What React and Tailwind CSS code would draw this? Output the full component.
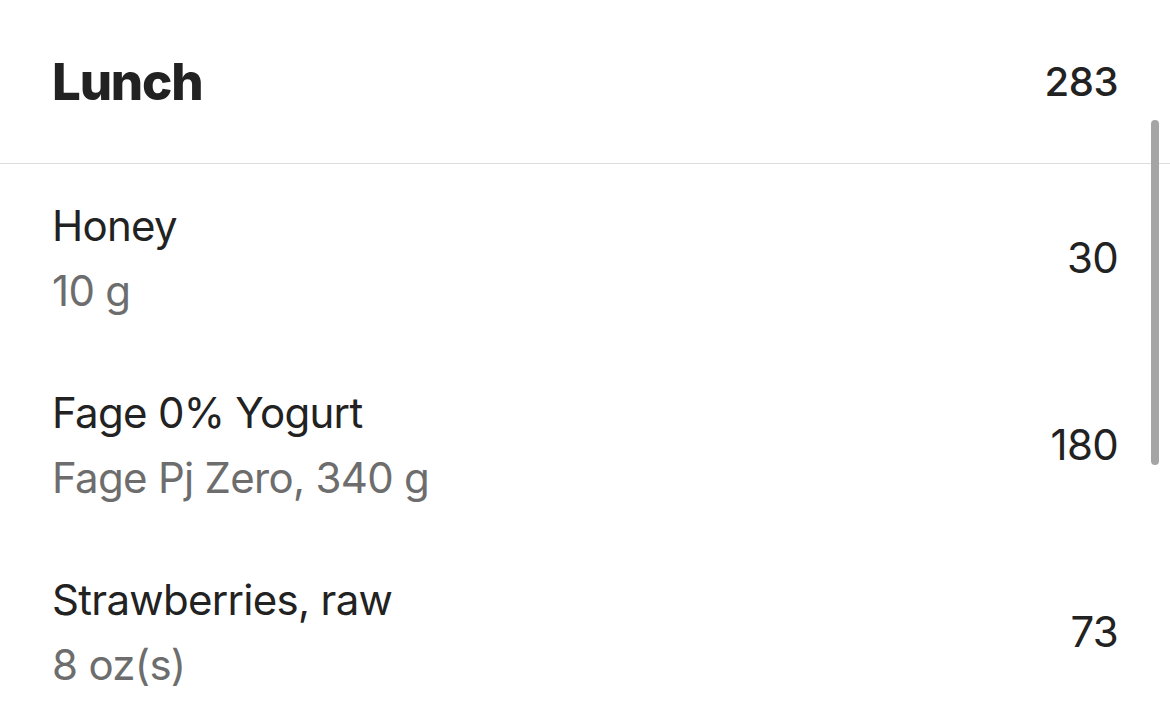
const items = [
  { name: 'Honey', detail: '10 g', kcal: 30 },
  { name: 'Fage 0% Yogurt', detail: 'Fage Pj Zero, 340 g', kcal: 180 },
  { name: 'Strawberries, raw', detail: '8 oz(s)', kcal: 73 },
];

export default function App() {
  return (
    <div className="relative w-[1170px] h-[720px] overflow-hidden bg-white font-['Inter',sans-serif] text-[#222222]">
      {/* Meal header */}
      <div className="flex h-[164px] items-center justify-between border-b border-[#dcdcdc] px-[52px]">
        <h2 className="text-[51px] font-extrabold leading-none tracking-[-1.2px]">Lunch</h2>
        <span className="text-[40px] font-medium leading-none tracking-[-0.5px]">283</span>
      </div>

      {/* Food entries */}
      {items.map(item => (
        <div key={item.name} className="flex h-[187px] items-center justify-between px-[52px] tracking-[-0.7px]">
          <div className="flex flex-col">
            <span className="text-[42px] leading-[65px]">{item.name}</span>
            <span className="text-[42px] leading-[65px] text-[#6d6d6d]">{item.detail}</span>
          </div>
          <span className="text-[42px] leading-none">{item.kcal}</span>
        </div>
      ))}

      {/* Scroll indicator */}
      <div className="absolute left-[1151px] top-[120px] h-[345px] w-[8px] rounded-full bg-[#a5a5a5]" />
    </div>
  );
}
